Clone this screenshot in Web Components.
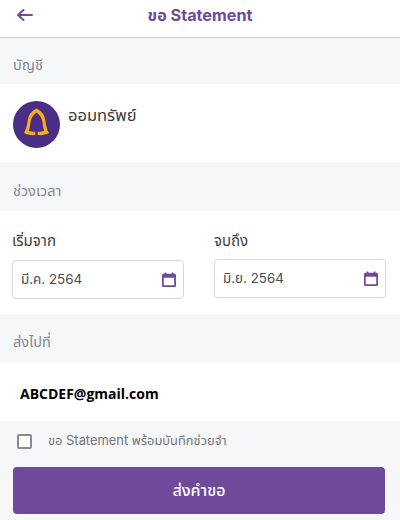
<!DOCTYPE html>
<html lang="th">
<head>
<meta charset="utf-8">
<title>ขอ Statement</title>
<style>
  html, body { margin: 0; padding: 0; }
  body {
    width: 400px;
    height: 520px;
    overflow: hidden;
    background: #f6f7f9;
    font-family: "Inter", "Noto Sans", "Noto Sans Thai", "Liberation Sans", "DejaVu Sans", sans-serif;
    color: #3c3c40;
  }
</style>
</head>
<body>
<app-header>ขอ Statement</app-header>
<section-label style="height:46px">บัญชี</section-label>
<account-row>ออมทรัพย์</account-row>
<section-label style="height:49px">ช่วงเวลา</section-label>
<period-panel>
  <date-field label="เริ่มจาก" value="มี.ค. 2564"></date-field>
  <date-field label="จบถึง" value="มิ.ย. 2564" raised></date-field>
</period-panel>
<section-label style="height:48px">ส่งไปที่</section-label>
<email-row>ABCDEF@gmail.com</email-row>
<memo-check>ขอ Statement พร้อมบันทึกช่วยจำ</memo-check>
<submit-button>ส่งคำขอ</submit-button>

<script>
class AppHeader extends HTMLElement {
  constructor () {
    super()
    this.attachShadow({ mode: 'open' })
  }
  connectedCallback () {
    this.shadowRoot.innerHTML = `
    <style>
      :host {
        display: flex;
        align-items: center;
        justify-content: center;
        box-sizing: border-box;
        height: 38px;
        position: relative;
        background: #fff;
        border-bottom: 1px solid #d3d0dc;
      }
      .title { color: #6f4a9b; font-size: 16.200px; font-weight: 700; padding-bottom: 6px; }
      svg { position: absolute; left: 16px; top: 7px; }
    </style>
    <svg width="18" height="16" viewBox="0 0 18 16" fill="none" stroke="#6f4a9b" stroke-width="2" stroke-linecap="round" stroke-linejoin="round">
      <path d="M2 8H16M7.500 3L2 8L7.500 13"/>
    </svg>
    <span class="title"><slot></slot></span>`
  }
}
customElements.define('app-header', AppHeader)

class SectionLabel extends HTMLElement {
  constructor () {
    super()
    this.attachShadow({ mode: 'open' })
  }
  connectedCallback () {
    this.shadowRoot.innerHTML = `
    <style>
      :host {
        display: flex;
        align-items: center;
        box-sizing: border-box;
        padding: 10px 13px 0;
        color: #85858c;
        font-size: 14.500px;
      }
    </style>
    <slot></slot>`
  }
}
customElements.define('section-label', SectionLabel)

class AccountRow extends HTMLElement {
  constructor () {
    super()
    this.attachShadow({ mode: 'open' })
  }
  connectedCallback () {
    this.shadowRoot.innerHTML = `
    <style>
      :host {
        display: flex;
        gap: 8px;
        box-sizing: border-box;
        height: 78px;
        padding: 17px 13px 0;
        background: #fff;
        color: #3c3c40;
        font-size: 16.500px;
      }
      svg { flex: none; }
      span { padding-top: 2px; }
    </style>
    <svg width="47" height="47" viewBox="0 0 47 47">
      <circle cx="23.500" cy="23.500" r="23.500" fill="#4c2d86"/>
      <path d="M23.500 7.500C20 9.500 17.200 11.500 16 14.500C14.500 18 14.500 26 11 32C14.500 33.800 18.500 34.500 22.300 34L22.300 30.800C20 30.800 17.500 30.500 15.800 29.800C17.500 26 17 21 18.500 17.500C19.500 15 21.500 13 23.500 11.500C25.500 13 27.500 15 28.500 17.500C30 21 29.500 26 31.200 29.800C29.500 30.500 27 30.800 24.700 30.800L24.700 34C28.500 34.500 32.500 33.800 36 32C32.500 26 32.500 18 31 14.500C29.800 11.500 27 9.500 23.500 7.500Z" fill="#f5ad1d"/>
    </svg>
    <span><slot></slot></span>`
  }
}
customElements.define('account-row', AccountRow)

class PeriodPanel extends HTMLElement {
  constructor () {
    super()
    this.attachShadow({ mode: 'open' })
  }
  connectedCallback () {
    this.shadowRoot.innerHTML = `
    <style>
      :host {
        display: grid;
        grid-template-columns: 172px 172px;
        column-gap: 30px;
        box-sizing: border-box;
        height: 103px;
        padding: 18px 14px 0 12px;
        background: #fff;
      }
    </style>
    <slot></slot>`
  }
}
customElements.define('period-panel', PeriodPanel)

class DateField extends HTMLElement {
  constructor () {
    super()
    this.attachShadow({ mode: 'open' })
  }
  connectedCallback () {
    this.shadowRoot.innerHTML = `
    <style>
      :host { display: block; font-size: 15px; color: #3c3c40; }
      .label { height: 31px; line-height: 24px; }
      :host([raised]) .label { height: 30px; }
      .box {
        display: flex;
        align-items: center;
        justify-content: space-between;
        box-sizing: border-box;
        height: 39px;
        padding: 0 7px 0 8px;
        border: 1px solid #d8d6e0;
        border-radius: 4px;
        background: #fff;
        color: #4a4a50;
        font-size: 13.400px;
      }
      svg { flex: none; }
    </style>
    <div class="label">${this.getAttribute('label')}</div>
    <div class="box">
      <span>${this.getAttribute('value')}</span>
      <svg width="14" height="15" viewBox="0 0 16 17" fill="#6f4a9b">
        <path d="M3 0.500H5V2H11V0.500H13V2H14.500C15.300 2 16 2.700 16 3.500V15.500C16 16.300 15.300 17 14.500 17H1.500C0.700 17 0 16.300 0 15.500V3.500C0 2.700 0.700 2 1.500 2H3ZM2 6.500V15H14V6.500Z" fill-rule="evenodd"/>
      </svg>
    </div>`
  }
}
customElements.define('date-field', DateField)

class EmailRow extends HTMLElement {
  constructor () {
    super()
    this.attachShadow({ mode: 'open' })
  }
  connectedCallback () {
    this.shadowRoot.innerHTML = `
    <style>
      :host {
        display: flex;
        align-items: center;
        box-sizing: border-box;
        height: 59px;
        padding: 3px 20px 0;
        background: #fff;
        color: #000;
        font-family: "Open Sans", "Liberation Sans", sans-serif;
        font-size: 14px;
        font-weight: 700;
      }
    </style>
    <slot></slot>`
  }
}
customElements.define('email-row', EmailRow)

class MemoCheck extends HTMLElement {
  constructor () {
    super()
    this.attachShadow({ mode: 'open' })
  }
  connectedCallback () {
    this.shadowRoot.innerHTML = `
    <style>
      :host {
        display: flex;
        align-items: center;
        gap: 16px;
        box-sizing: border-box;
        height: 46px;
        padding: 0 17px 6px;
        color: #75757c;
        font-size: 12.900px;
      }
      .box {
        flex: none;
        box-sizing: border-box;
        width: 15px;
        height: 15px;
        border: 2px solid #8b8b92;
        border-radius: 2px;
        background: #fff;
      }
    </style>
    <div class="box"></div>
    <span><slot></slot></span>`
  }
}
customElements.define('memo-check', MemoCheck)

class SubmitButton extends HTMLElement {
  constructor () {
    super()
    this.attachShadow({ mode: 'open' })
  }
  connectedCallback () {
    this.shadowRoot.innerHTML = `
    <style>
      :host {
        display: flex;
        align-items: center;
        justify-content: center;
        box-sizing: border-box;
        width: 372px;
        height: 47px;
        margin-left: 13px;
        border-radius: 4px;
        background: #6f4a9b;
        color: #fff;
        font-size: 16px;
        font-weight: 500;
      }
    </style>
    <slot></slot>`
  }
}
customElements.define('submit-button', SubmitButton)
</script>
</body>
</html>
